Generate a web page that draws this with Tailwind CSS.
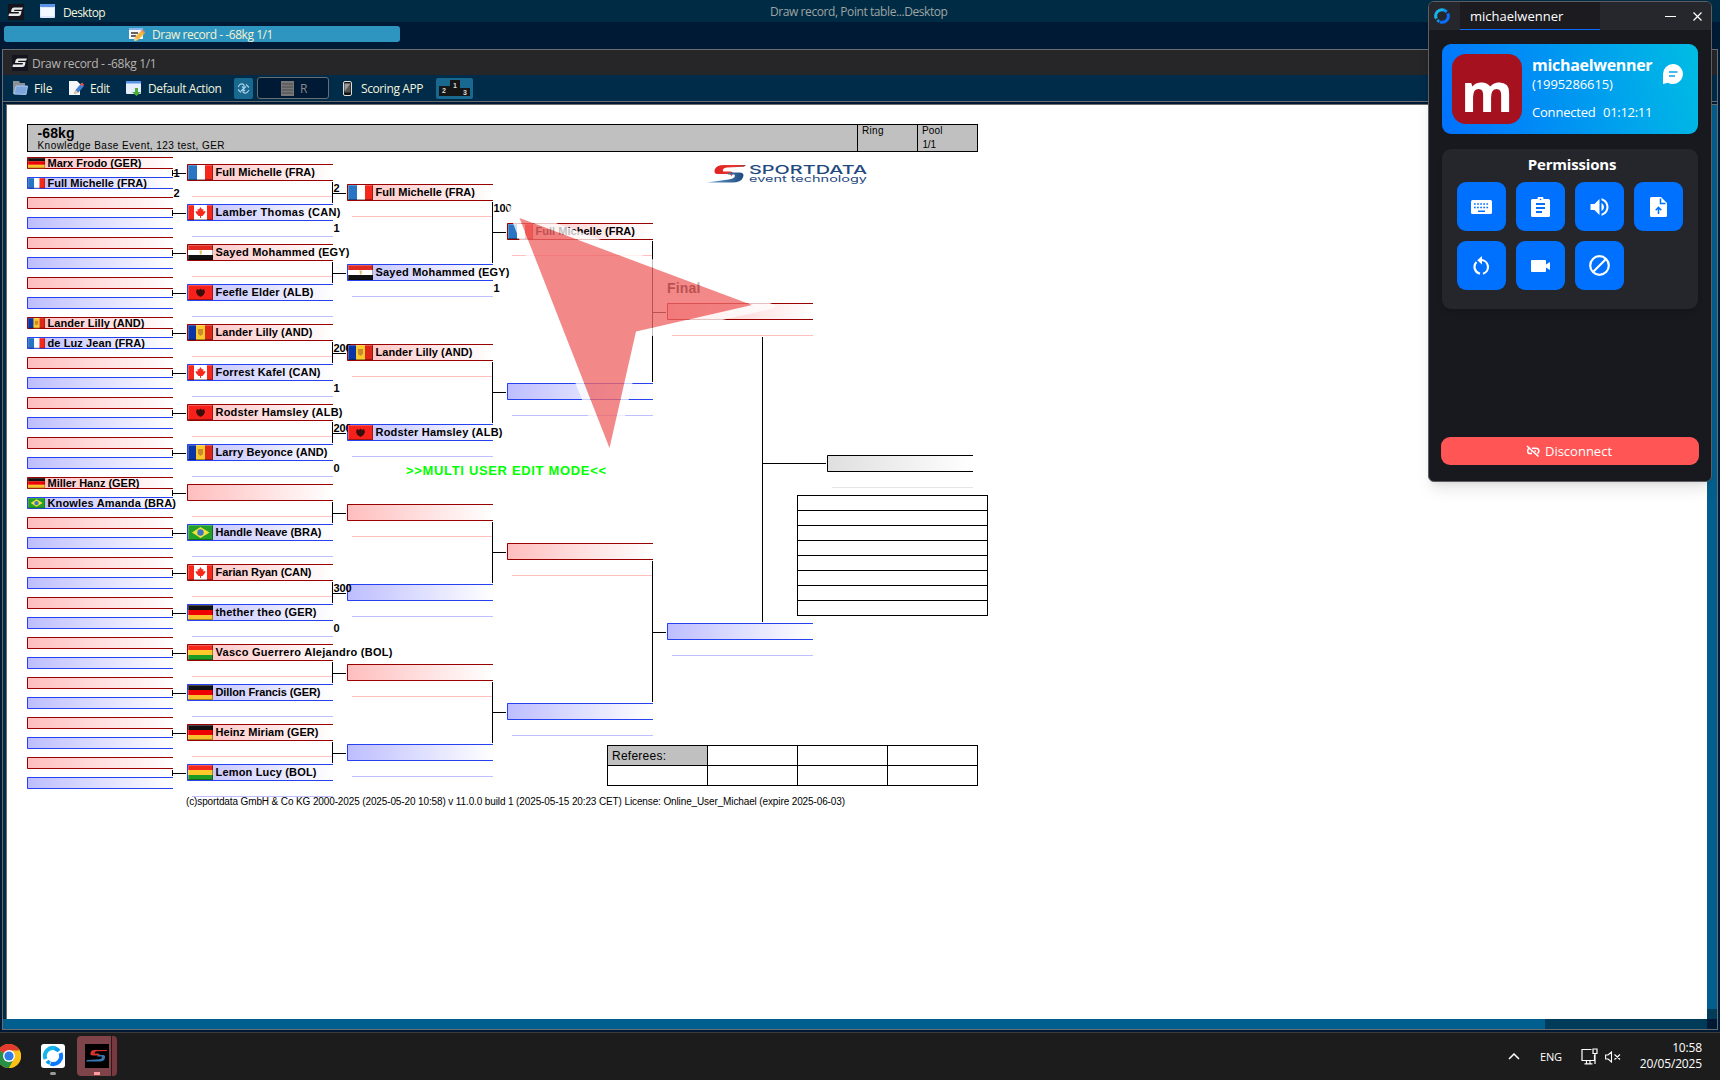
<!DOCTYPE html>
<html lang="en">

<head>
    <meta charset="UTF-8">
    <meta name="viewport" content="width=device-width, initial-scale=1.0">
    <title>Draw record - -68kg 1/1</title>

    <!-- Tailwind CSS -->
    <script src="https://cdn.jsdelivr.net/npm/@tailwindcss/browser@4"></script>
</head>

<body class="w-[1720px] h-[1080px] overflow-hidden relative flex flex-col bg-[#001a35] font-['Open_Sans',sans-serif] text-[12px]">

    <!-- Desktop bar -->
    <header class="h-[22px] shrink-0 bg-[#002b45] flex items-center relative text-[#f3f3dc]">
        <svg class="ml-2 mt-[1px] w-4 h-4" viewBox="0 0 16 16"><rect width="16" height="16" fill="#14141f"/><path d="M15 3.500H6q-2 0-2.500 2L3 8h8l-.5 1.500H1L.5 12h10q2 0 2.500-2L13.500 7H6l.5-1.300h7.500z" fill="#e8e8e8"/></svg>
        <svg class="ml-4 w-[15px] h-[14px]" viewBox="0 0 15 14"><rect width="15" height="14" rx="1" fill="#dfe9fb"/><rect width="15" height="3" rx="1" fill="#5b95e8"/><path d="M1 4h13v8H1z" fill="#f4f8ff"/></svg>
        <span class="ml-2 mt-[3px] tracking-[-0.6px]">Desktop</span>
        <span class="absolute left-[770px] top-[3px] text-[#9fa5a2] tracking-[-0.42px] whitespace-nowrap">Draw record, Point table...Desktop</span>
    </header>

    <div class="h-[27px] shrink-0 pt-1 pl-1">
        <div class="w-[396px] h-4 rounded-[3px] bg-[#2e94c0] flex items-center text-[#f3f3d0]">
            <svg class="ml-[125px] w-4 h-[15px]" viewBox="0 0 16 15"><rect x="0" y="1" width="14" height="11" fill="#f5f7fb"/><rect x="0" y="1" width="14" height="2" fill="#8eb4ea"/><path d="M2 6h7M2 9h5" stroke="#333" stroke-width="1.500"/><path d="M5 14l1-4 7-7 3 3-7 7z" fill="#f3b73e"/><path d="M5 14l1-4 3 3z" fill="#e9d2a0"/><path d="M12 4l1.500-1.500 2.500 2.500-1 1.500z" fill="#e58b6c"/></svg>
            <span class="ml-[7px] mt-[2px] tracking-[-0.45px]">Draw record - -68kg 1/1</span>
        </div>
    </div>

    <!-- Draw record window -->
    <div class="h-[981px] w-[1716px] ml-[2px] shrink-0 border border-[#6a6d70] flex flex-col bg-[#002b45]">
        <div class="h-[25px] shrink-0 bg-[#262628] flex items-center text-[#b4b4b4]">
            <svg class="ml-[9px] w-4 h-4" viewBox="0 0 16 16"><rect width="16" height="16" fill="#14141f"/><path d="M15 3.500H6q-2 0-2.500 2L3 8h8l-.5 1.500H1L.5 12h10q2 0 2.500-2L13.500 7H6l.5-1.300h7.500z" fill="#e8e8e8"/></svg>
            <span class="ml-1 mt-[2px] tracking-[-0.3px]">Draw record - -68kg 1/1</span>
        </div>
        <div class="h-[27px] shrink-0 border-b border-[#6a6d70] bg-[#002b49] flex items-center text-[#f3f3dc]">
            <svg class="ml-[9px] w-4 h-4" viewBox="0 0 16 16"><path d="M1 1h6l1 2h5v11H1z" fill="#8a8f98"/><path d="M2 14l2-8h11.500l-1.500 8.500z" fill="#7ea6dc" stroke="#a9c6ee"/></svg>
            <span class="ml-[6px] mt-[2px] w-[18px] tracking-[-0.2px]">File</span>
            <svg class="ml-4 w-4 h-4" viewBox="0 0 16 16"><path d="M1 1h8l3 3v11H1z" fill="#f6f7fb"/><path d="M6 14l1.500-4L13 3.500l3 2.500-5.500 6.500z" fill="#3f7fd4"/><path d="M12 4.500l2-2 2 2-1.500 2z" fill="#e0574d"/><path d="M6 14l1.500-4 3 2.500z" fill="#efc58c"/></svg>
            <span class="ml-[6px] mt-[2px] w-5 tracking-[-0.4px]">Edit</span>
            <svg class="ml-4 w-4 h-4" viewBox="0 0 16 16"><rect x="0" y="1" width="15" height="13" rx="1" fill="#e8effc"/><rect x="0" y="1" width="15" height="2.500" fill="#5b95e8"/><path d="M9 8h3v4h3l-4.500 4L6 12h3z" fill="#4fae3b"/></svg>
            <span class="ml-[6px] mt-[2px] w-[76px] whitespace-nowrap tracking-[-0.4px]">Default Action</span>
            <div class="ml-[10px] w-[19px] h-[21px] bg-[#18688f] rounded-[2px] grid place-items-center">
                <svg class="w-[13px] h-[13px]" viewBox="0 0 13 13" fill="none" stroke="#a9d3e6" stroke-width="1.100"><path d="M1 5l2-2.500q2-1.500 4 .5L7 5M5 4.500L7 6.500l2-2M12 8l-2 2.500q-2 1.500-4-.5L6 8M4 9l2-2 2 2M1 7.500l3 3M9 2.500l3 3"/></svg>
            </div>
            <div class="ml-1 w-[72px] h-[22px] rounded-[3px] border border-[#6a6d70] bg-[#001a35] flex items-center text-[#85898c]">
                <svg class="ml-[23px] w-[13px] h-[15px]" viewBox="0 0 13 15"><rect width="13" height="15" fill="#777"/><path d="M1 3h11M1 6h11M1 9h11M1 12h11" stroke="#4a4a4a"/></svg>
                <span class="ml-[6px] mt-[2px]">R</span>
            </div>
            <svg class="ml-[14px] w-[9px] h-[15px]" viewBox="0 0 9 15"><rect x=".5" y=".5" width="8" height="14" rx="1.500" fill="#111" stroke="#ddd"/><path d="M1.500 2.500h6v9h-6z" fill="#555"/><path d="M1.500 2.500h6l-6 8z" fill="#999"/></svg>
            <span class="ml-[9px] mt-[2px] w-[66px] whitespace-nowrap tracking-[-0.4px]">Scoring APP</span>
            <div class="ml-[9px] w-[37px] h-[21px] bg-[#18688f] rounded-[2px] grid place-items-center">
                <svg class="w-[32px] h-[16px]" viewBox="0 0 32 16"><path d="M0 6h11V0h10v8h10v8H0z" fill="#161616"/><g class="font-['Liberation_Sans',sans-serif] font-bold text-[7px]" fill="#ddd"><text x="3" y="13">2</text><text x="14" y="8">1</text><text x="24" y="14.500">3</text></g></svg>
            </div>
        </div>
        <div class="h-[2px] shrink-0 bg-[#001a35]"></div>

        <!-- Document area with scrollbars -->
        <div class="flex flex-1 border-t border-l border-[#6a6d70] ml-[3px]">
            <div class="w-[1700px] flex flex-col">
                <svg id="draw" class="w-[1700px] h-[914px] bg-white" viewBox="7 105 1700 914"></svg>
                <div class="h-[10px] flex bg-[#003c5a] -ml-1"><div class="w-[1542px] bg-[#005f8f]"></div></div>
            </div>
            <div class="w-[10px] flex flex-col bg-[#003c5a]">
                <div class="h-[904px] bg-[#005f8f]"></div>
                <div class="h-[10px]"></div>
                <div class="flex-1 bg-[#001a35]"></div>
            </div>
        </div>
    </div>

    <!-- Taskbar -->
    <footer class="mt-[2px] h-12 shrink-0 border-t border-[#3b3b3b] bg-[#1c1c1c] flex items-center text-white">
        <svg class="-ml-[3px] -mt-[1px] w-6 h-6" viewBox="0 0 24 24"><circle cx="12" cy="12" r="12" fill="#fbc116"/><path d="M12 12L1.600 6A12 12 0 0 1 22.400 6z" fill="#e33b2e"/><path d="M1.600 6A12 12 0 0 0 12 24l5-9-5-3z" fill="#269145"/><path d="M12 6.500h10.700A12 12 0 0 1 12 24l5-9z" fill="#fbc116"/><circle cx="12" cy="12" r="6" fill="#fff"/><circle cx="12" cy="12" r="4.600" fill="#2f7bea"/></svg>
        <div class="ml-5 w-6 h-full flex flex-col items-center">
            <svg class="mt-[11px] w-6 h-6" viewBox="0 0 24 24"><rect width="24" height="24" rx="3" fill="#fff"/><g fill="none" stroke-width="4"><path d="M4.500 15A8 8 0 0 1 14.500 4.400" stroke="#17b4ea"/><path d="M19.500 9A8 8 0 0 1 9.500 19.600" stroke="#0a7bff"/><path d="M14 4.500a8 8 0 0 1 4 2.500M6 17a8 8 0 0 0 3 2" stroke="#0a9bf5"/></g></svg>
            <div class="mt-1 w-[6px] h-[3px] rounded-sm bg-[#9a9a9a]"></div>
        </div>
        <div class="ml-3 -mt-[1px] w-10 h-10 rounded-[4px] bg-[#7f4449] border-r-[5px] border-[#75393f] shadow-[inset_-1px_0_0_#33181b] flex flex-col items-center">
            <svg class="mt-2 ml-[5px] w-6 h-6 shrink-0" viewBox="0 0 24 24"><rect width="24" height="24" fill="#000"/><path d="M22 6H9q-3 0-3.500 3-.5 2.500 2 2.500h6q1.500 1 1.500 1 0-3-2-3H9.500q0-2 2-2.300L22 7z" fill="#d8322a"/><path d="M1 17.500h14q4 0 5-3.500.5-3-2-3h-5l-1 1.500h5q0 2.500-3 2.800L2 16z" fill="#3a75ab"/></svg>
            <div class="mt-1 ml-[5px] w-[6px] h-[3px] bg-[#ff9a9f] shrink-0"></div>
        </div>
        <div class="ml-auto mr-[18px] flex items-center text-[11px]">
            <svg class="w-3 h-[7px]" viewBox="0 0 12 7" fill="none" stroke="#fff" stroke-width="1.500"><path d="M1 6l5-5 5 5"/></svg>
            <span class="ml-[20px] mt-[2px] w-6 tracking-[-0.2px]">ENG</span>
            <svg class="ml-[17px] w-[17px] h-[17px]" viewBox="0 0 17 17" fill="none" stroke="#fff" stroke-width="1.200"><path d="M10.500 1.500H1v11h12.500V7M5.500 12.500v3M9 12.500v3M3.500 15.800h8M12 1h4v4.500h-4zM14 5.500V16"/></svg>
            <svg class="ml-[7px] w-4 h-3" viewBox="0 0 16 12" fill="none" stroke="#fff" stroke-width="1.100"><path d="M.6 4v4h2.500L6.500 11V1L3 4zM9.500 3.500l5.500 5M15 3.500l-5.500 5"/></svg>
            <div class="ml-[17px] -mt-[1px] w-[64px] text-right text-[12px] leading-[16px] tracking-[-0.15px]">10:58<br>20/05/2025</div>
        </div>
    </footer>

    <!-- Remote session panel, floats over the desktop -->
    <aside class="absolute left-[1428px] top-[1px] w-[284px] h-[481px] rounded-[6px] border border-[#5d5e60] bg-[#18191e] overflow-hidden flex flex-col text-white shadow-lg">
        <div class="h-[28px] shrink-0 bg-[#25272c] flex items-center">
            <svg class="ml-[5px] w-4 h-4" viewBox="0 0 24 24" fill="none" stroke-width="4.500"><path d="M3.500 16A9.300 9.300 0 0 1 15 3.200" stroke="#17b4ea"/><path d="M20.500 8A9.300 9.300 0 0 1 9 20.800" stroke="#0a6fff"/><path d="M14.500 3a9.300 9.300 0 0 1 4.500 3M5 18a9.300 9.300 0 0 0 3 2.300" stroke="#0a8ff5"/></svg>
            <div class="ml-[10px] w-[140px] h-full bg-[#1b1b20] border-b border-[#0a6cff] pl-[10px] pt-[5px] text-[13px] leading-[19px]">michaelwenner</div>
            <svg class="ml-[65px] w-[11px] h-[9px]" viewBox="0 0 11 9"><path d="M0 4.500h11" stroke="#fff"/></svg>
            <svg class="ml-[17px] w-[9px] h-[9px]" viewBox="0 0 9 9"><path d="M.5.5l8 8M8.500.5l-8 8" stroke="#fff" stroke-width="1.200"/></svg>
        </div>

        <div class="mt-[14px] ml-[13px] w-[256px] h-[90px] shrink-0 rounded-[9px] bg-linear-[72deg] from-[#0071ff] to-[#00bde3] flex p-[10px]">
            <div class="w-[70px] h-[70px] rounded-[14px] bg-[#a61120] text-center font-bold text-[53px] leading-[76px]">m</div>
            <div class="ml-[10px] w-[124px] pt-[2px] whitespace-nowrap">
                <div class="text-[16px] leading-[18px] font-bold tracking-[-0.3px]">michaelwenner</div>
                <div class="mt-[1px] text-[13px] leading-[18px] tracking-[-0.1px]">(1995286615)</div>
                <div class="mt-[10px] text-[13px] leading-[18px] flex tracking-[-0.2px]"><span class="w-[71px]">Connected</span><span class="tracking-[-0.3px]">01:12:11</span></div>
            </div>
            <svg class="mt-[10px] ml-[7px] w-5 h-5 shrink-0" viewBox="0 0 20 20"><path d="M10 0a10 10 0 1 1-5 18.700L0 20V10A10 10 0 0 1 10 0z" fill="#fff"/><path d="M6 8h8.500M6 12h6" stroke="#0aa3ee" stroke-width="1.400"/></svg>
        </div>

        <div class="mt-[15px] ml-[13px] w-[256px] h-[160px] shrink-0 rounded-[9px] bg-[#24262c] shadow-md">
            <div class="pt-[5px] pl-1 text-center text-[15px] leading-[21px] font-bold tracking-[-0.2px]">Permissions</div>
            <div class="mt-[7px] ml-[15px] grid grid-cols-[repeat(4,49px)] auto-rows-[49px] gap-[10px]">
                <div class="rounded-[9px] bg-[#0071ff] grid place-items-center"><svg class="w-[21px] h-[14px]" viewBox="0 0 21 14"><rect width="21" height="14" rx="1.500" fill="#fff"/><path d="M3 4h15M3 7.500h15" stroke="#0071ff" stroke-width="1.700" stroke-dasharray="1.700 1.400"/><path d="M7 11.200h7" stroke="#0071ff" stroke-width="1.600"/></svg></div>
                <div class="rounded-[9px] bg-[#0071ff] grid place-items-center"><svg class="w-[19px] h-5" viewBox="0 0 19 20"><path d="M1.500 2H6.500a3 3 0 0 1 6 0h5A1.500 1.500 0 0 1 19 3.500v15a1.500 1.500 0 0 1-1.500 1.500h-16A1.500 1.500 0 0 1 0 18.500v-15A1.500 1.500 0 0 1 1.500 2z" fill="#fff"/><circle cx="9.500" cy="2.500" r=".8" fill="#0071ff"/><path d="M5 7h9M5 11h9M5 15h6" stroke="#0071ff" stroke-width="1.900"/></svg></div>
                <div class="rounded-[9px] bg-[#0071ff] grid place-items-center"><svg class="w-[19px] h-[18px]" viewBox="3 3 18 18"><path d="M3 9v6h4l5 5V4L7 9H3zm13.500 3c0-1.770-1.020-3.290-2.500-4.030v8.050c1.480-.73 2.500-2.250 2.500-4.020zM14 3.230v2.060c2.890.86 5 3.540 5 6.710s-2.110 5.850-5 6.710v2.060c4.010-.91 7-4.490 7-8.770s-2.990-7.860-7-8.770z" fill="#fff"/></svg></div>
                <div class="rounded-[9px] bg-[#0071ff] grid place-items-center"><svg class="w-[17px] h-5" viewBox="0 0 17 20"><path d="M1.500 0H11l6 6v12.500a1.500 1.500 0 0 1-1.500 1.500h-14A1.500 1.500 0 0 1 0 18.500v-17A1.500 1.500 0 0 1 1.500 0z" fill="#fff"/><path d="M10.500 1.500V6.500H15.500M8.500 17v-6M5.700 13.200l2.800-2.800 2.800 2.800" fill="none" stroke="#0071ff" stroke-width="1.500"/></svg></div>
                <div class="rounded-[9px] bg-[#0071ff] grid place-items-center"><svg class="w-[17px] h-[19px]" viewBox="0 0 17 19"><path d="M3.500 6A7 7 0 0 0 7 17.700M10 17.700A7 7 0 0 0 8 4" fill="none" stroke="#fff" stroke-width="2.200"/><path d="M4.200 4.200L9 0v8.500z" fill="#fff"/></svg></div>
                <div class="rounded-[9px] bg-[#0071ff] grid place-items-center"><svg class="w-[19px] h-3" viewBox="0 0 19 12"><path d="M1 0h13a1 1 0 0 1 1 1v3.500L19 2v8l-4-2.500V11a1 1 0 0 1-1 1H1a1 1 0 0 1-1-1V1a1 1 0 0 1 1-1z" fill="#fff"/></svg></div>
                <div class="rounded-[9px] bg-[#0071ff] grid place-items-center"><svg class="w-[21px] h-[21px]" viewBox="0 0 21 21" fill="none" stroke="#fff" stroke-width="2.200"><circle cx="10.500" cy="10.500" r="9.300"/><path d="M4 17L17 4"/></svg></div>
            </div>
        </div>

        <button class="mt-[128px] ml-3 w-[258px] h-7 shrink-0 rounded-[9px] bg-[#ff5555] flex items-center justify-center gap-[5px] text-[13px]">
            <svg class="w-[14px] h-[12px]" viewBox="0 0 14 12" fill="none" stroke="#fff" stroke-width="1.500"><path d="M1 1l11.500 10.500M6 3.300h4.200a2.700 2.700 0 0 1 1 5.200M4.300 3.300a2.600 2.600 0 0 0 0 5.300H6M5 6h2M8.500 6H10"/></svg>
            <span class="mt-[1px] mr-[2px]">Disconnect</span>
        </button>
    </aside>

    <!-- JS -->
    <script>

        const FLAGS = {
            GER: '<rect width="25" height="5" fill="#111"/><rect y="5" width="25" height="5" fill="#e00"/><rect y="10" width="25" height="5" fill="#f9c02e"/>',
            FRA: '<rect width="9" height="15" fill="#2a74c4"/><rect x="9" width="8" height="15" fill="#fff"/><rect x="17" width="8" height="15" fill="#f6281c"/>',
            CAN: '<rect width="25" height="15" fill="#fff"/><path d="M0 0h6v15H0zM19 0h6v15h-6z" fill="#f6281c"/><path d="M12.500 2l1.500 2.500 1.500-.5-.3 2.500L17.500 6l-.5 2-2.500 3H13v2h-1v-2h-1.500L8 8l-.5-2 2.300.5L9.500 4l1.500.5z" fill="#f6281c"/>',
            EGY: '<rect width="25" height="5" fill="#e02a20"/><rect y="5" width="25" height="5" fill="#fff"/><rect y="10" width="25" height="5" fill="#111"/><path d="M11.500 5.500h2.500l-.5 4h-1.500z" fill="#e5bd62"/>',
            ALB: '<rect width="25" height="15" fill="#f8201a"/><path d="M9 4l2 1 1.500-1.500L14 5l2-1 1 3-1.500 3-3 2-3-2L8 7z" fill="#3a0d0d"/>',
            AND: '<rect width="9" height="15" fill="#0b35a5"/><rect x="8" width="9" height="15" fill="#fbc92c"/><rect x="17" width="8" height="15" fill="#dc2618"/><path d="M10 4h5v5l-2.500 2L10 9z" fill="#c98a2b"/>',
            BRA: '<rect width="25" height="15" fill="#22a02a"/><path d="M12.500 2L21.500 7.500 12.500 13 4 7.500z" fill="#f6e03a"/><circle cx="12.500" cy="7.500" r="3.200" fill="#3b78c4"/>',
            BOL: '<rect width="25" height="5" fill="#f6281c"/><rect y="5" width="25" height="5" fill="#fbc92c"/><rect y="10" width="25" height="5" fill="#1f9a25"/>'
        }

        // drawn width of every competitor name
        const WIDTHS = {
            'Marx Frodo (GER)': 94, 'Full Michelle (FRA)': 99.5, 'Lander Lilly (AND)': 97, 'de Luz Jean (FRA)': 97.5,
            'Miller Hanz (GER)': 92, 'Knowles Amanda (BRA)': 128.5, 'Lamber Thomas (CAN)': 125, 'Sayed Mohammed (EGY)': 134,
            'Feefle Elder (ALB)': 98, 'Forrest Kafel (CAN)': 105, 'Rodster Hamsley (ALB)': 127, 'Larry Beyonce (AND)': 112,
            'Handle Neave (BRA)': 106, 'Farian Ryan (CAN)': 96, 'thether theo (GER)': 101, 'Vasco Guerrero Alejandro (BOL)': 177,
            'Dillon Francis (GER)': 105, 'Heinz Miriam (GER)': 103, 'Lemon Lucy (BOL)': 101
        }

        // x, y of the first box, distance between boxes, number of boxes, box height
        const rounds = [
            { x: 27, y: 157, step: 20, count: 32, h: 12, score: 20,
                names: { 0: 'Marx Frodo (GER)', 1: 'Full Michelle (FRA)', 8: 'Lander Lilly (AND)', 9: 'de Luz Jean (FRA)', 16: 'Miller Hanz (GER)', 17: 'Knowles Amanda (BRA)' },
                scores: { 0: 1, 1: 2 } },
            { x: 187, y: 164, step: 40, count: 16, h: 17, score: 28,
                names: ['Full Michelle (FRA)', 'Lamber Thomas (CAN)', 'Sayed Mohammed (EGY)', 'Feefle Elder (ALB)', 'Lander Lilly (AND)', 'Forrest Kafel (CAN)', 'Rodster Hamsley (ALB)', 'Larry Beyonce (AND)', '', 'Handle Neave (BRA)', 'Farian Ryan (CAN)', 'thether theo (GER)', 'Vasco Guerrero Alejandro (BOL)', 'Dillon Francis (GER)', 'Heinz Miriam (GER)', 'Lemon Lucy (BOL)'],
                scores: { 0: 2, 1: 1, 4: 200, 5: 1, 6: 200, 7: 0, 10: 300, 11: 0 } },
            { x: 347, y: 184, step: 80, count: 8, h: 17, score: 28,
                names: ['Full Michelle (FRA)', 'Sayed Mohammed (EGY)', 'Lander Lilly (AND)', 'Rodster Hamsley (ALB)'],
                scores: { 0: 100, 1: 1 } },
            { x: 507, y: 223, step: 160, count: 4, h: 17, names: ['Full Michelle (FRA)'] },
            { x: 667, y: 303, step: 320, count: 2, h: 17, names: [] }
        ]

        let boxes = '', lines = '', labels = '', scores = ''

        function addBox(x, y, h, fill, stroke) {
            boxes += `<rect x="${x}" y="${y}" width="146" height="${h}" fill="url(#${fill})"/>
                <path d="M${x + 146} ${y + .5}H${x + .5}V${y + h - .5}H${x + 146}" fill="none" stroke="${stroke}"/>`
        }

        function addText(x, y, width, size, text, attrs = '') {
            return `<text x="${x}" y="${y}" font-size="${size}" textLength="${width}" ${attrs}>${text}</text>`
        }

        rounds.forEach((round, r) => {
            for (let i = 0; i < round.count; i++) {
                const y = round.y + i * round.step
                const red = i % 2 == 0
                addBox(round.x, y, round.h, red ? 'red' : 'blue', red ? '#990000' : '#2541f0')
                // sub line under the bigger boxes
                if (r > 0) {
                    lines += `<path d="M${round.x + 5} ${y + 32.5}h141" stroke="${red ? '#ffbfbf' : '#bfbfff'}"/>`
                }
                const name = round.names[i]
                if (name) {
                    const small = r == 0
                    const flag = FLAGS[name.slice(-4, -1)]
                    labels += `<g transform="translate(${round.x + 1} ${y + 1}) scale(${small ? .68 : 1} ${small ? .68 : 1})">${flag}<path d="M.5 15V.5H25" fill="none" stroke="#fff" stroke-opacity=".25"/><path d="M24.500 0V14.500H0" fill="none" stroke="#000" stroke-opacity=".35"/></g>`
                    labels += addText(round.x + (small ? 20.5 : 28.5), y + (small ? 10 : 12), WIDTHS[name], 11, name, 'font-weight="bold"')
                }
                if (round.scores && i in round.scores) {
                    const score = String(round.scores[i])
                    scores += addText(round.x + 146.5, y + round.score, score.length * 6, 11, score, 'font-weight="bold"')
                }
            }
        })

        // connectors
        for (let i = 0; i < 16; i++) lines += `<path d="M172.500 ${170 + i * 40}v6M172 ${173.5 + i * 40}h14" stroke="#000"/>`
        for (let i = 0; i < 8; i++) lines += `<path d="M332.500 ${182 + i * 80}v21M333 ${193.5 + i * 80}h13" stroke="#000"/>`
        for (let i = 0; i < 4; i++) lines += `<path d="M492.500 ${202 + i * 160}v61M493 ${232.5 + i * 160}h13" stroke="#000"/>`
        for (let i = 0; i < 2; i++) lines += `<path d="M652.500 ${241 + i * 320}v141M653 ${312.5 + i * 320}h13" stroke="#000"/>`
        lines += '<path d="M762.500 337v285M763 463.500h63" stroke="#000"/>'

        // winner box and ranking table
        addBox(827, 455, 17, 'gray', '#000')
        lines += '<path d="M832 487.500h141" stroke="#e4e4e4"/>'
        let table = '<rect x="797.500" y="495.500" width="190" height="120"/>'
        for (let i = 1; i < 8; i++) table += `<path d="M797 ${495.5 + i * 15}h190"/>`

        const arrow = '519.500,218 752,305 636,331.500 609.500,448'

        document.getElementById('draw').innerHTML = `
            <defs>
                <linearGradient id="red"><stop stop-color="#ffbdbd"/><stop offset="1" stop-color="#fff"/></linearGradient>
                <linearGradient id="blue"><stop stop-color="#bdbdff"/><stop offset="1" stop-color="#fff"/></linearGradient>
                <linearGradient id="gray"><stop stop-color="#dfdfdf"/><stop offset="1" stop-color="#fff"/></linearGradient>
                <linearGradient id="logoRed"><stop stop-color="#e02020"/><stop offset=".6" stop-color="#e5392f"/><stop offset="1" stop-color="#9c3a40"/></linearGradient>
                <linearGradient id="logoBlue"><stop stop-color="#6a9fd0"/><stop offset="1" stop-color="#1f4c80"/></linearGradient>
                <mask id="outside"><rect x="450" y="150" width="400" height="400" fill="#fff"/><polygon points="${arrow}" fill="#000"/></mask>
            </defs>
            <g font-family="Liberation Sans, sans-serif">
                <rect x="27.500" y="124.500" width="950" height="27" fill="#c0c0c0" stroke="#000"/>
                <path d="M857.500 124v27M917.500 124v27" stroke="#000"/>
                ${addText(37.5, 138, 37, 14, '-68kg', 'font-weight="bold"')}
                ${addText(37.5, 149, 187, 10, 'Knowledge Base Event, 123 test, GER')}
                ${addText(862, 134, 21.5, 10, 'Ring')}
                ${addText(922, 134, 20.5, 10, 'Pool')}
                ${addText(922.5, 148, 13.5, 10, '1/1')}
                ${boxes}${lines}${scores}${labels}
                ${addText(667, 293, 33.5, 14, 'Final', 'font-weight="bold"')}
                ${addText(406, 475, 200, 13, '&gt;&gt;MULTI USER EDIT MODE&lt;&lt;', 'font-weight="bold" fill="#00ff00"')}
                <g fill="#fff" stroke="#000">${table}</g>
                <rect x="607.500" y="745.500" width="370" height="40" fill="#fff" stroke="#000"/>
                <rect x="607.500" y="745.500" width="100" height="20" fill="#c0c0c0" stroke="#000"/>
                <path d="M607 765.500h370M707.500 745v40M797.500 745v40M887.500 745v40" stroke="#000"/>
                ${addText(612, 760, 54, 12, 'Referees:')}
                <g class="whitespace-pre">${addText(186, 805, 659, 10, '(c)sportdata GmbH &amp; Co KG 2000-2025 (2025-05-20 10:58)  v 11.0.0 build 1 (2025-05-15 20:23 CET) License: Online_User_Michael (expire 2025-06-03)')}</g>
            </g>
            <path d="M746 165H724q-7 0-9 4-2 5 3 5h12q1.500 1 1 2.500 4-4 0-5h-8q-1-3.500 4-4l17-.8z" fill="url(#logoRed)"/>
            <path d="M707 182.500h25q9 0 11-5 2-5-4-5h-8q-3 0-3.500 2h7q2 4-6 5z" fill="url(#logoBlue)"/>
            <g font-family="Inter, sans-serif" fill="#1f4a80">
                <text x="749" y="173.500" font-size="12" font-weight="500" textLength="118" lengthAdjust="spacingAndGlyphs">SPORTDATA</text>
                <text x="749" y="182" font-size="9" textLength="118" lengthAdjust="spacingAndGlyphs">event technology</text>
            </g>
            <polygon points="${arrow}" fill="none" stroke="#fff" stroke-opacity=".75" stroke-width="16" stroke-miterlimit="10" mask="url(#outside)"/>
            <polygon points="${arrow}" fill="#ee6666" fill-opacity=".78"/>
        `

    </script>
</body>

</html>
